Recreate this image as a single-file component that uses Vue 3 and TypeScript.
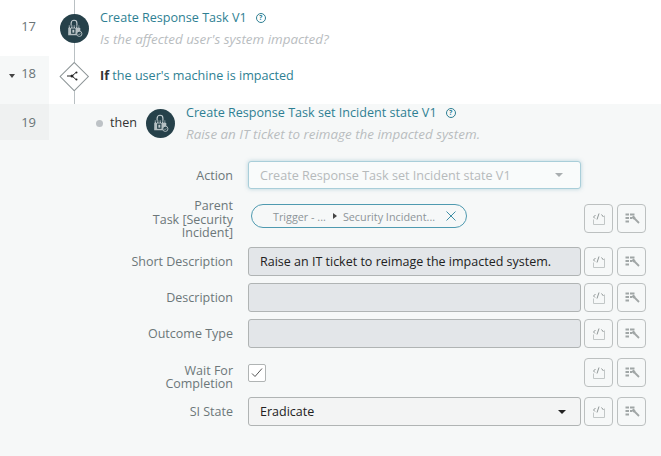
<template>
  <div class="page">
    <!-- shared icons -->
    <svg class="defs" width="0" height="0" aria-hidden="true">
      <defs>
        <symbol id="task-icon" viewBox="0 0 30 30">
          <circle cx="15" cy="15" r="15" fill="#26414a" />
          <path d="M11.500 12V9.500a3 3 0 0 1 6 0V12" fill="none" stroke="#c3cccf" stroke-width="1.200" />
          <path d="M9 12.500h11M9 14h11" stroke="#c3cccf" stroke-width="1" stroke-dasharray="1.500 1" />
          <path d="M8.500 14.500h12.500v4l-2.500 3.500h-10z" fill="#b6c0c3" />
          <rect x="11.500" y="15" width="4.500" height="5.500" fill="#26414a" />
          <rect x="12.800" y="16.300" width="2" height="3" fill="#c3cccf" />
          <circle cx="20" cy="20.500" r="2.700" fill="#26414a" stroke="#c3cccf" stroke-width=".9" />
          <path d="M18.900 20.500l.8.900 1.400-1.500" fill="none" stroke="#c3cccf" stroke-width=".7" />
        </symbol>
        <symbol id="script-icon" viewBox="0 0 16 14">
          <path d="M2.500 7.500v5h11V3.500" fill="none" stroke="#c2c7c7" stroke-width="1" />
          <path d="M4.500 3L2.500 5l1.500 1.500M8 1.500L6 7.500M10.500 2.500l2 2.500" fill="none" stroke="#8f9696" stroke-width="1" />
        </symbol>
        <symbol id="pick-icon" viewBox="0 0 16 14">
          <path d="M1.500 1.500h3.500v2H1.500zM1.500 5h3.500v2H1.500zM1.500 8.500h3.500v2H1.500zM6 1.500h4.500v2H6zM6 5h2v2H6z" fill="#a0a6a6" />
          <path d="M8.500 4.500l2 2" stroke="#a0a6a6" stroke-width="3" />
          <path d="M10 6l5 5" stroke="#a0a6a6" stroke-width="1.800" />
        </symbol>
      </defs>
    </svg>

    <div class="row row-17">
      <div class="gutter">17</div>
      <div class="node">
        <svg class="task-icon"><use href="#task-icon" /></svg>
      </div>
      <div class="step">
        <div class="step-title">
          <span>Create Response Task V1</span>
          <span class="help">?</span>
        </div>
        <div class="step-note">Is the affected user's system impacted?</div>
      </div>
    </div>

    <div class="row row-18">
      <div class="gutter gutter-light">
        <span class="caret"></span>18
      </div>
      <div class="node">
        <span class="diamond"></span>
        <svg class="branch" width="12" height="10" viewBox="0 0 12 10">
          <path d="M0 5h5M5 5l4-3.500M5 5l4 3.500" fill="none" stroke="#222" stroke-width="1" />
          <circle cx="5" cy="5" r="1.500" fill="#222" />
          <circle cx="9.500" cy="1.500" r="1" fill="#222" />
          <circle cx="9.500" cy="8.500" r="1" fill="#222" />
        </svg>
      </div>
      <div class="condition"><b>If</b> <span>the user's machine is impacted</span></div>
    </div>

    <div class="panel">
      <div class="row row-19">
        <div class="gutter gutter-dark">19</div>
        <div class="then">
          <span class="dot"></span>
          <span class="then-label">then</span>
          <svg class="task-icon"><use href="#task-icon" /></svg>
        </div>
        <div class="step step-nested">
          <div class="step-title">
            <span>Create Response Task set Incident state V1</span>
            <span class="help">?</span>
          </div>
          <div class="step-note">Raise an IT ticket to reimage the impacted system.</div>
        </div>
      </div>

      <form class="form" @submit.prevent>
        <div class="field field-action">
          <label>Action</label>
          <div class="action-select">
            <span>Create Response Task set Incident state V1</span>
            <i class="arrow arrow-light"></i>
          </div>
        </div>

        <div class="field field-parent">
          <label>Parent<br />Task [Security<br />Incident]</label>
          <div class="chip">
            <span class="chip-a">Trigger - ...</span>
            <i class="chip-sep"></i>
            <span>Security Incident...</span>
            <svg class="chip-x" width="12" height="12" viewBox="0 0 12 12">
              <path d="M1.500 1.500l9 9M10.500 1.500l-9 9" stroke="#3f8fa6" stroke-width="1" fill="none" />
            </svg>
          </div>
          <div class="actions">
            <button type="button" v-for="name in actionIcons" :key="name">
              <svg width="16" height="14"><use :href="name" /></svg>
            </button>
          </div>
        </div>

        <div v-for="item in textFields" :key="item.label" class="field">
          <label>{{ item.label }}</label>
          <div class="input">{{ item.value }}</div>
          <div class="actions">
            <button type="button" v-for="name in actionIcons" :key="name">
              <svg width="16" height="14"><use :href="name" /></svg>
            </button>
          </div>
        </div>

        <div class="field field-wait">
          <label>Wait For<br />Completion</label>
          <div class="checkbox">
            <svg width="12" height="10" viewBox="0 0 12 10">
              <path d="M1 5.500l3 3 7-8" fill="none" stroke="#555" stroke-width="1" />
            </svg>
          </div>
          <div class="actions">
            <button type="button" v-for="name in actionIcons" :key="name">
              <svg width="16" height="14"><use :href="name" /></svg>
            </button>
          </div>
        </div>

        <div class="field">
          <label>SI State</label>
          <div class="state-select">
            <span>Eradicate</span>
            <i class="arrow"></i>
          </div>
          <div class="actions">
            <button type="button" v-for="name in actionIcons" :key="name">
              <svg width="16" height="14"><use :href="name" /></svg>
            </button>
          </div>
        </div>
      </form>
    </div>
  </div>
</template>

<script setup lang="ts">
interface TextField {
  label: string;
  value: string;
}

const actionIcons: string[] = ['#script-icon', '#pick-icon'];

const textFields: TextField[] = [
  { label: 'Short Description', value: 'Raise an IT ticket to reimage the impacted system.' },
  { label: 'Description', value: '' },
  { label: 'Outcome Type', value: '' }
];
</script>

<style>
html,
body {
  margin: 0;
  background: #fff;
}
</style>

<style scoped>
.page {
  width: 661px;
  height: 456px;
  overflow: hidden;
  font-family: "Open Sans", "Liberation Sans", sans-serif;
  font-size: 12px;
  color: #333;
}

.defs {
  position: absolute;
}

.row {
  display: flex;
}

.row-17 {
  height: 56px;
}

.row-18 {
  height: 48px;
}

.gutter {
  width: 49px;
  flex: none;
  box-sizing: border-box;
  padding-top: 17px;
  padding-right: 13px;
  text-align: right;
  color: #6a7477;
  font-size: 13px;
  line-height: 18px;
}

.gutter-light {
  background: #f6f8f8;
  padding-top: 8px;
}

.gutter-dark {
  background: #eff1f1;
  padding-top: 9px;
  height: 36px;
}

.caret {
  display: inline-block;
  width: 0;
  height: 0;
  border: 3px solid transparent;
  border-top: 4px solid #444;
  border-bottom: 0;
  margin-right: 6px;
  vertical-align: 0;
}

.node {
  width: 51px;
  flex: none;
  position: relative;
}

/* timeline behind the nodes */
.node::before {
  content: "";
  position: absolute;
  left: 25px;
  top: 0;
  bottom: 0;
  width: 1px;
  background: #b9c0c3;
}

.task-icon {
  width: 29px;
  height: 29px;
  flex: none;
  position: relative;
}

.row-17 .task-icon {
  margin: 14px 0 0 11px;
}

.step-title {
  display: flex;
  align-items: center;
  color: #2e7f93;
  font-size: 12.600px;
  line-height: 18px;
  padding-top: 9px;
}

.help {
  width: 8px;
  height: 8px;
  margin-left: 9px;
  border: 1px solid #2e7f93;
  border-radius: 50%;
  font-size: 7px;
  font-weight: 700;
  line-height: 8px;
  text-align: center;
}

.step-note {
  margin-top: 3px;
  color: #b9bdbf;
  font-size: 13.400px;
  font-style: italic;
  line-height: 18px;
}

.diamond {
  position: absolute;
  left: 15.250px;
  top: 9.750px;
  width: 18.500px;
  height: 18.500px;
  background: #fff;
  border: 1px solid #8d9597;
  transform: rotate(45deg);
  display: block;
}

.branch {
  position: absolute;
  left: 18px;
  top: 15px;
}

.condition {
  padding-top: 11px;
  line-height: 18px;
  font-size: 12.600px;
  color: #2e7f93;
}

.condition b {
  color: #333;
}

.panel {
  background: #f6f8f8;
  height: 352px;
}

.row-19 {
  height: 36px;
}

.then {
  width: 137px;
  flex: none;
  box-sizing: border-box;
  padding-left: 47px;
  display: flex;
  align-items: center;
  height: 38px;
  position: relative;
}

.dot {
  width: 7px;
  height: 7px;
  border-radius: 50%;
  background: #bdc2c6;
  margin-right: 7px;
}

.then-label {
  font-size: 12.600px;
  margin-right: 9px;
  margin-bottom: 1px;
}

.step-nested .step-title {
  padding-top: 0;
}

.step-nested .step-note {
  margin-top: 3px;
}

.form {
  padding-top: 21px;
}

.field {
  display: flex;
  align-items: center;
  margin-bottom: 7px;
  height: 29px;
}

.field > label {
  width: 233px;
  flex: none;
  box-sizing: border-box;
  margin-right: 15px;
  text-align: right;
  color: #6c7779;
  font-size: 12.500px;
  line-height: 13.500px;
}

.field-action {
  margin-bottom: 14px;
}

.field-action > label {
  margin-top: 1px;
}

.field-parent {
  margin-bottom: 14px;
  align-items: flex-start;
}

.field-parent > label {
  margin-top: -5px;
}

.field-wait {
  margin: 10px 0;
}

.field-wait > label {
  margin-top: 9px;
}

.input,
.state-select {
  width: 333px;
  height: 29px;
  flex: none;
  box-sizing: border-box;
  padding: 0 11px;
  border: 1px solid #b0b4b4;
  border-radius: 3px;
  background: #e3e6e9;
  color: #222;
  font-size: 12.500px;
  line-height: 27px;
}

.state-select {
  background: #f3f4f4;
  display: flex;
  justify-content: space-between;
  align-items: center;
}

.action-select {
  width: 333px;
  height: 28px;
  align-self: flex-start;
  box-sizing: border-box;
  padding: 0 17px 0 11px;
  border: 1px solid #a9ced9;
  border-radius: 3px;
  background: #f9fbfb;
  box-shadow: 0 0 4px rgba(70, 140, 165, 0.35);
  color: #b6babb;
  font-size: 12.600px;
  display: flex;
  justify-content: space-between;
  align-items: center;
}

.arrow {
  width: 0;
  height: 0;
  margin-right: 3px;
  border: 4px solid transparent;
  border-top: 4px solid #222;
  border-bottom: 0;
}

.arrow-light {
  border-top-color: #a9aeb0;
  margin-right: 0;
}

.chip {
  width: 216px;
  height: 24px;
  margin-left: 3px;
  box-sizing: border-box;
  flex: none;
  padding: 0 9px 0 21px;
  border: 1px solid #4f9ab0;
  border-radius: 12px;
  display: flex;
  align-items: center;
  color: #8d9598;
  font-size: 10.800px;
  position: relative;
}

.chip-sep {
  width: 0;
  height: 0;
  margin: 0 6px 0 7px;
  border: 3px solid transparent;
  border-left: 4px solid #444;
  border-right: 0;
}

.chip-x {
  margin-left: auto;
}

.actions {
  display: flex;
  gap: 4px;
  margin-left: 3px;
}

.actions button {
  width: 29px;
  height: 29px;
  padding: 0;
  box-sizing: border-box;
  border: 1px solid #bcc0c0;
  border-radius: 4px;
  background: transparent;
  display: flex;
  align-items: center;
  justify-content: center;
}

.field-parent .actions {
  margin-left: 117px;
}

.checkbox {
  width: 18px;
  height: 18px;
  box-sizing: border-box;
  flex: none;
  border: 1px solid #b0b4b4;
  border-radius: 2px;
  background: #fff;
  display: flex;
  align-items: center;
  justify-content: center;
  margin-right: 315px;
}
</style>
